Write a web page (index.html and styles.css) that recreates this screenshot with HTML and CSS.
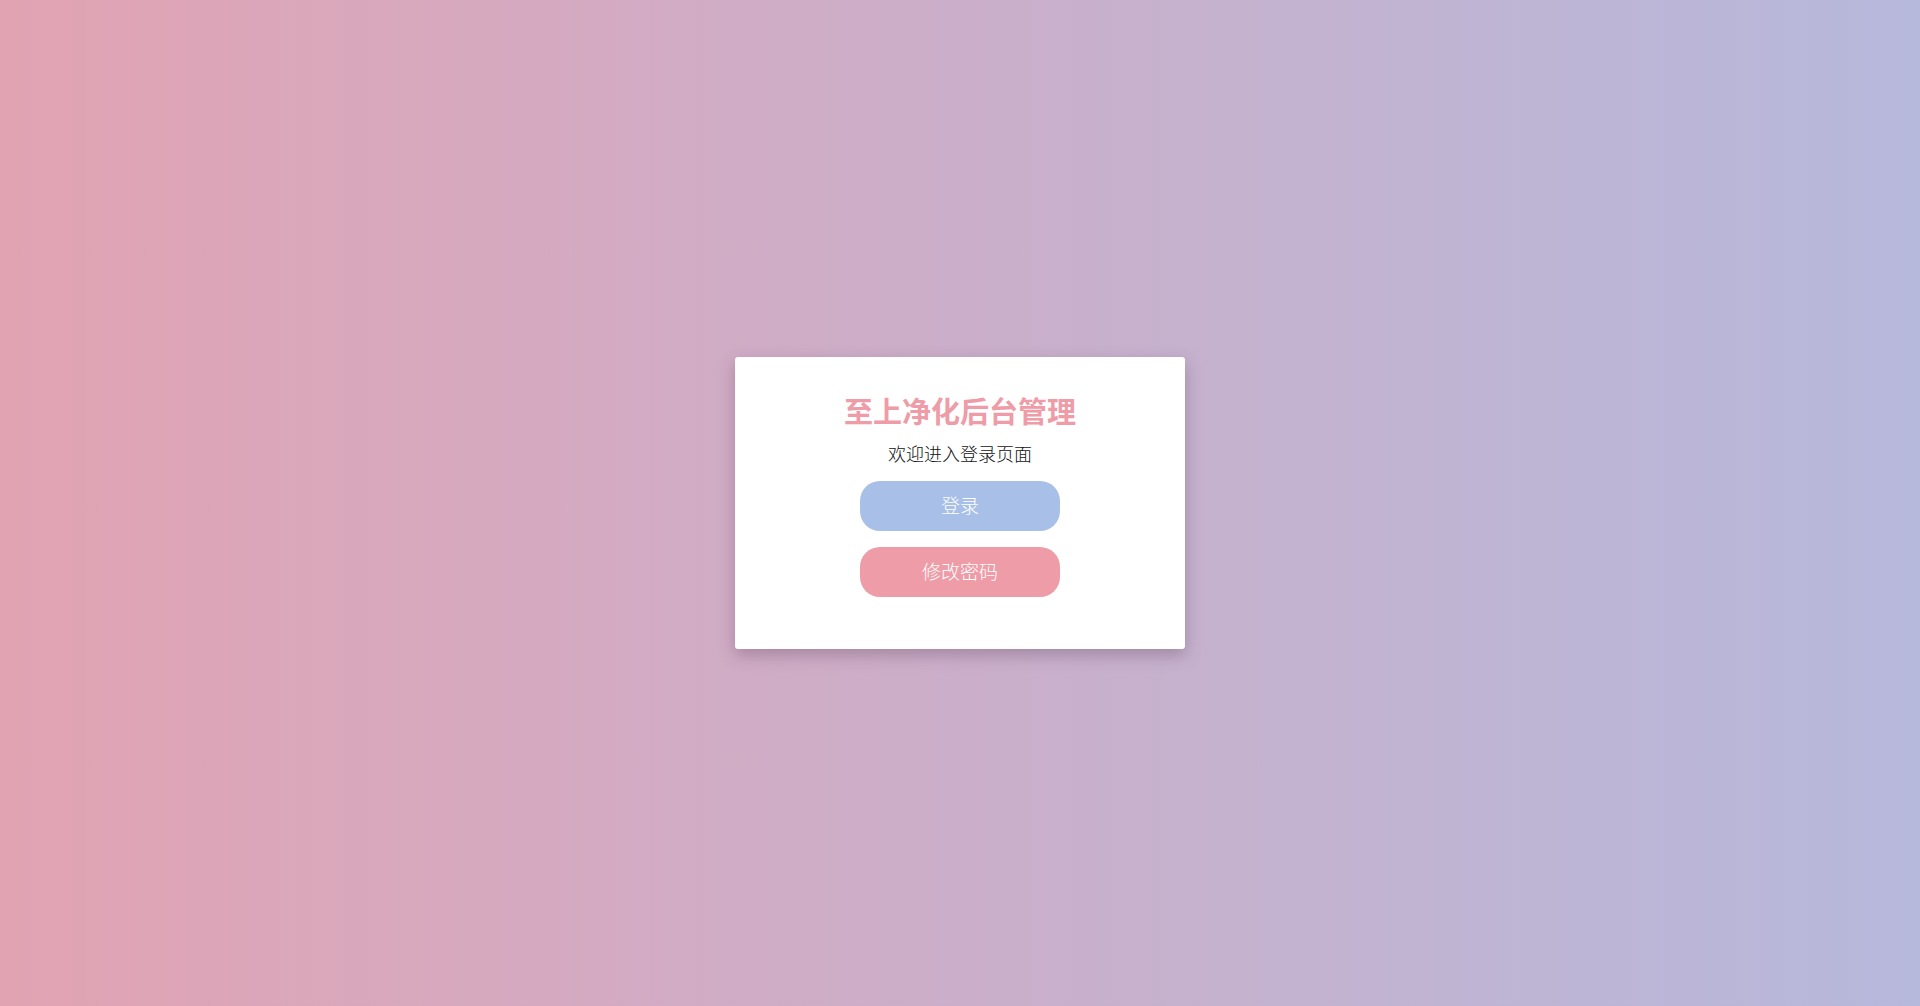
FILE: index.html
```html
<!DOCTYPE html>
<html lang="zh-CN">
<head>
<meta charset="utf-8">
<title>至上净化后台管理</title>
<link rel="stylesheet" href="styles.css">
</head>
<body>
<main class="page">
  <section class="card">
    <h1 class="title">至上净化后台管理</h1>
    <p class="subtitle">欢迎进入登录页面</p>
    <button class="btn btn-login">登录</button>
    <button class="btn btn-change">修改密码</button>
  </section>
</main>
</body>
</html>
```
FILE: styles.css
```css
html, body {
  margin: 0;
  padding: 0;
  height: 100%;
}
body {
  font-family: "Noto Sans CJK SC", "Noto Sans", sans-serif;
  background: linear-gradient(to right, #e1a3b2, #d2abc4 35%, #c4b2cf 65%, #b6b8dc);
}
.page {
  height: 100%;
  display: flex;
  align-items: center;
  justify-content: center;
}
.card {
  width: 450px;
  box-sizing: border-box;
  padding: 35px 0 52px;
  background: #fff;
  border-radius: 3px;
  box-shadow: 0 6px 16px rgba(90, 60, 90, 0.35);
  display: flex;
  flex-direction: column;
  align-items: center;
}
.title {
  margin: 0;
  font-size: 29px;
  line-height: 36px;
  font-weight: 700;
  color: #ee9ca7;
}
.subtitle {
  margin: 13px 0 16px;
  font-size: 18px;
  line-height: 24px;
  font-weight: 300;
  color: #111;
}
.btn {
  width: 200px;
  height: 50px;
  border: none;
  border-radius: 20px;
  color: #fff;
  font-family: inherit;
  font-size: 19px;
  line-height: 48px;
  font-weight: 300;
  cursor: pointer;
  padding: 0 0 2px;
}
.btn-login {
  background: #a8bfe8;
}
.btn-change {
  margin-top: 16px;
  background: #ee9ca7;
}
```
